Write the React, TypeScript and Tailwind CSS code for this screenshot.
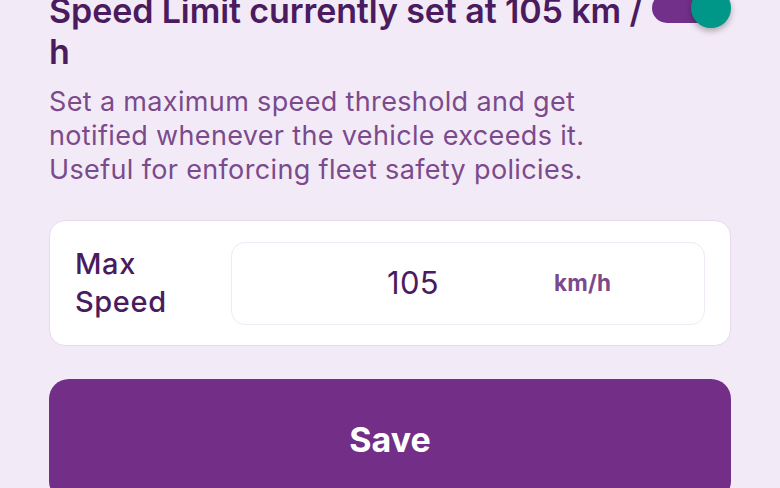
import React from "react";

export default function App() {
  return (
    <div className="w-[780px] h-[488px] overflow-hidden bg-[#f3eaf7]" style={{ fontFamily: "Inter, 'Noto Sans', sans-serif" }}>
      <div className="px-[49px] mt-[-10px]">
        <div className="flex items-start gap-[2px]">
          <h1 className="flex-1 text-[34px] leading-[41px] font-semibold text-[#4a1b5e] tracking-[-0.1px]">
            Speed Limit currently set at 105 km / h
          </h1>
          <div className="relative w-[80px] h-[40px] shrink-0">
            <div className="absolute left-[1px] top-[3px] w-[68px] h-[30px] rounded-full bg-[#73308a]" />
            <div className="absolute right-0 top-[-2px] w-[40px] h-[40px] rounded-full bg-[#009688] shadow-[0_3px_6px_rgba(0,0,0,0.3)]" />
          </div>
        </div>
        <p className="mt-[13px] w-[560px] text-[27px] leading-[34px] tracking-[0.35px] text-[#7b4a8c]">
          Set a maximum speed threshold and get notified whenever the vehicle exceeds it. Useful for enforcing fleet safety policies.
        </p>
        <div className="mt-[33px] h-[126px] rounded-[16px] bg-white border-[1.5px] border-[#e8d9ef] flex items-center pl-[25px] pr-[25px] gap-[20px]">
          <div className="w-[136px] text-[29px] leading-[38px] font-medium tracking-[0.6px] text-[#4a1b5e]">Max Speed</div>
          <div className="flex-1 h-[83px] rounded-[14px] border-[1.5px] border-[#f1e8f5] flex items-center">
            <div className="flex-1 text-center text-[31px] tracking-[0.4px] text-[#4a1b5e] pl-[40px]">105</div>
            <div className="w-[150px] text-[22.5px] font-bold tracking-[0.2px] text-[#7b4a8c]">km/h</div>
          </div>
        </div>
        <button className="mt-[33px] w-full h-[122px] rounded-[20px] bg-[#732f87] text-white text-[34px] font-bold flex items-start justify-center pt-[35px]">
          Save
        </button>
      </div>
    </div>
  );
}
